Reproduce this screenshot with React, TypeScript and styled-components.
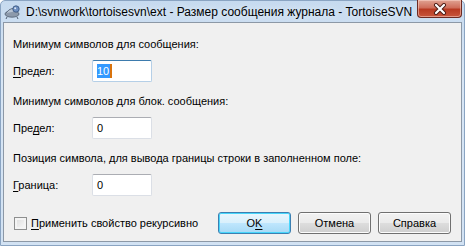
import React from 'react';
import styled, {createGlobalStyle, css} from 'styled-components';

const GlobalStyle = createGlobalStyle`
  html, body {
    margin: 0;
    padding: 0;
    width: 465px;
    height: 246px;
    overflow: hidden;
    background: #fff;
  }
`;

const uiFont = `"Liberation Sans", "DejaVu Sans", sans-serif`;

const Window = styled.div`
  width: 465px;
  height: 246px;
  box-sizing: border-box;
  display: flex;
  flex-direction: column;
  background: linear-gradient(180deg, #c6daef 0%, #d8e6f5 30%, #d2e2f3 100%);
  border: 1px solid #8aa4c2;
  border-radius: 5px 5px 0 0;
  font-family: ${uiFont};
`;

const TitleBar = styled.div`
  height: 21px;
  display: flex;
  align-items: flex-start;
  padding-left: 2px;
  gap: 5px;
`;

const TitleIcon = styled.svg`
  width: 18px;
  height: 18px;
  margin-top: 2px;
  flex: none;
`;

const TitleText = styled.div`
  font-size: 12px;
  line-height: 22px;
  color: #000;
  white-space: nowrap;
  text-shadow: 0 0 6px #eef5fc;
`;

const CloseButton = styled.div`
  margin-left: auto;
  margin-right: 2px;
  margin-top: -1px;
  width: 46px;
  height: 18px;
  box-sizing: border-box;
  border: 1px solid #6d2a22;
  border-top: none;
  border-radius: 0 0 4px 4px;
  background: linear-gradient(180deg, #e0a393 0%, #cf6e5b 45%, #b83a22 55%, #c8553c 100%);
  box-shadow: inset 0 0 0 1px rgba(255, 220, 210, 0.5);
  display: flex;
  align-items: center;
  justify-content: center;
`;

const Client = styled.div`
  flex: 1;
  margin: 0 2px 3px 2px;
  border: 1px solid #8c98a6;
  background: #f0f0f0;
  padding: 14px 10px 0 9px;
  display: flex;
  flex-direction: column;
  font-size: 11px;
  color: #000;
`;

const Section = styled.div`
  display: flex;
  flex-direction: column;
  gap: 9px;
  margin-bottom: 12px;
`;

const Heading = styled.div`
  height: 14px;
  line-height: 14px;
  white-space: nowrap;
`;

const Row = styled.div`
  height: 22px;
  display: flex;
  align-items: center;
`;

const Label = styled.div`
  width: 79px;
  line-height: 14px;
`;

const Key = styled.span`
  text-decoration: underline;
  text-underline-offset: 2px;
`;

const Field = styled.div<{$focused?: boolean}>`
  width: 60px;
  height: 22px;
  box-sizing: border-box;
  background: #fff;
  border: 1px solid #dbdfe6;
  border-top-color: #abadb3;
  border-radius: 2px;
  padding: 0 0 0 4px;
  display: flex;
  align-items: center;
  line-height: 14px;
  ${(p) =>
    p.$focused &&
    css`
      border-color: #b5cfe7;
      border-top-color: #3d7bad;
    `}
`;

const Selected = styled.span`
  background: #3399ff;
  color: #fff;
  padding: 0 1px 0 0;
  border-right: 2px solid #d9730d;
`;

const Footer = styled.div`
  margin-top: 4px;
  display: flex;
  align-items: center;
  gap: 7px;
`;

const CheckRow = styled.label`
  display: flex;
  align-items: center;
  gap: 4px;
  margin-left: 1px;
  margin-right: auto;
`;

const Box = styled.span`
  width: 13px;
  height: 13px;
  box-sizing: border-box;
  border: 1px solid #8e8f8f;
  background: linear-gradient(135deg, #dcdcdc 0%, #f4f4f4 80%);
  box-shadow: inset 0 0 0 2px #f4f4f4;
`;

const Button = styled.div<{$default?: boolean}>`
  width: 73px;
  height: 22px;
  box-sizing: border-box;
  border: 1px solid #707070;
  border-radius: 3px;
  background: linear-gradient(180deg, #f2f2f2 0%, #ebebeb 48%, #dddddd 52%, #cfcfcf 100%);
  box-shadow: inset 0 0 0 1px #fcfcfc;
  display: flex;
  align-items: center;
  justify-content: center;
  ${(p) =>
    p.$default &&
    css`
      border-color: #3c7fb1;
      background: linear-gradient(180deg, #eaf6fd 0%, #d9f0fc 48%, #bee6fd 52%, #a7d9f5 100%);
      box-shadow: inset 0 0 0 1px #48d6fb;
    `}
`;

const TortoiseIcon = () => (
  <TitleIcon viewBox="0 0 18 18">
    <ellipse cx="9" cy="11" rx="7" ry="3.2" fill="#8d9aab" stroke="#4f5d70" strokeWidth="0.8" />
    <path d="M3 10 Q9 2 15 8" fill="#b8c4d3" stroke="#4f5d70" strokeWidth="0.8" />
    <circle cx="13" cy="6" r="3.2" fill="#6e8fc0" stroke="#34507a" strokeWidth="0.8" />
    <circle cx="12.2" cy="5.2" r="1" fill="#dfe8f5" />
    <path d="M4 14 L3 16 M14 14 L15 16" stroke="#4f5d70" strokeWidth="1" />
  </TitleIcon>
);

const CloseGlyph = () => (
  <svg width="14" height="12" viewBox="0 0 14 12">
    <path d="M3 2 L11 10 M11 2 L3 10" stroke="#4a1a14" strokeWidth="4" strokeLinecap="round" />
    <path d="M3 2 L11 10 M11 2 L3 10" stroke="#fff" strokeWidth="2.2" strokeLinecap="round" />
  </svg>
);

export default function App() {
  return (
    <>
      <GlobalStyle />
      <Window>
        <TitleBar>
          <TortoiseIcon />
          <TitleText>D:\svnwork\tortoisesvn\ext - Размер сообщения журнала - TortoiseSVN</TitleText>
          <CloseButton>
            <CloseGlyph />
          </CloseButton>
        </TitleBar>
        <Client>
          <Section>
            <Heading>Минимум символов для сообщения:</Heading>
            <Row>
              <Label>
                <Key>П</Key>редел:
              </Label>
              <Field $focused>
                <Selected>10</Selected>
              </Field>
            </Row>
          </Section>
          <Section>
            <Heading>Минимум символов для блок. сообщения:</Heading>
            <Row>
              <Label>
                Пре<Key>д</Key>ел:
              </Label>
              <Field>0</Field>
            </Row>
          </Section>
          <Section>
            <Heading>Позиция символа, для вывода границы строки в заполненном поле:</Heading>
            <Row>
              <Label>
                <Key>Г</Key>раница:
              </Label>
              <Field>0</Field>
            </Row>
          </Section>
          <Footer>
            <CheckRow>
              <Box />
              <span>
                <Key>П</Key>рименить свойство рекурсивно
              </span>
            </CheckRow>
            <Button $default>
              <span>
                O<Key>K</Key>
              </span>
            </Button>
            <Button>Отмена</Button>
            <Button>Справка</Button>
          </Footer>
        </Client>
      </Window>
    </>
  );
}
